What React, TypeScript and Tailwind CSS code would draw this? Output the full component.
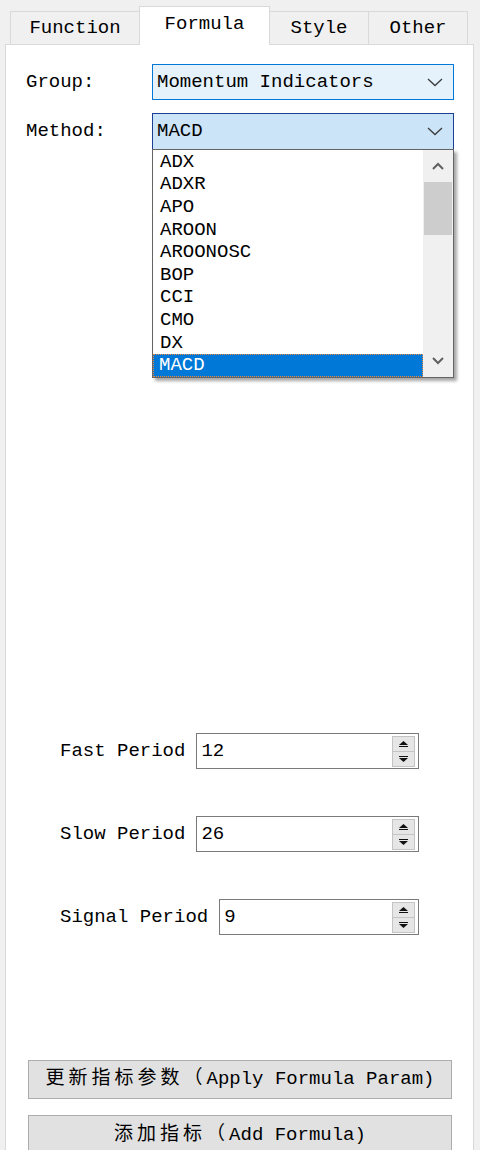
const mono = "font-['Liberation_Mono','Noto_Sans_CJK_SC',monospace]";

const items = ["ADX", "ADXR", "APO", "AROON", "AROONOSC", "BOP", "CCI", "CMO", "DX", "MACD"];

const Chevron = () => (
    <svg width="16" height="9" viewBox="0 0 16 9" className="shrink-0">
        <polyline points="1,1 8,7.5 15,1" fill="none" stroke="#3c3c3c" strokeWidth="1.3" />
    </svg>
);

const Cjk = ({ children }: { children: string }) => (
    <span className="tracking-[4px]">{children}</span>
);

const Tab = ({ label, width, active }: { label: string; width: string; active?: boolean }) =>
    active ? (
        <div className={`${width} h-[39px] -mb-px relative z-10 bg-white border border-b-0 border-[#d9d9d9] flex items-center justify-center pb-[3px]`}>
            {label}
        </div>
    ) : (
        <div className={`${width} h-[33px] bg-[#f0f0f0] border border-b-0 border-[#d9d9d9] -ml-px first:ml-0 flex items-center justify-center`}>
            {label}
        </div>
    );

const SpinRow = ({ label, value }: { label: string; value: string }) => (
    <div className="ml-[54px] w-[359px] flex items-center gap-[11px]">
        <span className="whitespace-pre">{label}</span>
        <div className="flex-1 h-[36px] border border-[#7a7a7a] bg-white flex items-center pl-[4px] pr-[3px]">
            <span className="flex-1">{value}</span>
            <div className="w-[23px] h-[31px] flex flex-col border border-[#c4c4c4] bg-[#e6e6e6]">
                <div className="flex-1 flex items-center justify-center border-b border-[#c4c4c4]">
                    <svg width="9" height="6" viewBox="0 0 9 6"><polygon points="4.5,0 9,4 0,4" fill="#111" /><rect x="0" y="5" width="9" height="1" fill="#111" /></svg>
                </div>
                <div className="flex-1 flex items-center justify-center">
                    <svg width="9" height="6" viewBox="0 0 9 6"><rect x="0" y="0" width="9" height="1" fill="#111" /><polygon points="0,2 9,2 4.5,6" fill="#111" /></svg>
                </div>
            </div>
        </div>
    </div>
);

export default function App() {
    return (
        <div className={`w-[480px] h-[1150px] overflow-hidden bg-[#f0f0f0] pt-[6px] text-[19px] leading-none text-black ${mono}`}>
            <div className="flex items-end ml-[10px]">
                <Tab label="Function" width="w-[130px]" />
                <Tab label="Formula" width="w-[131px] -ml-px" active />
                <Tab label="Style" width="w-[100px] -ml-px" />
                <Tab label="Other" width="w-[100px]" />
            </div>

            <div className="ml-[5px] w-[469px] h-[1120px] bg-white border border-[#d9d9d9] pt-[19px]">
                <div className="flex items-center pl-[20px]">
                    <span className="w-[126px]">Group:</span>
                    <div className="w-[302px] h-[36px] bg-[#e5f1fb] border border-[#0078d7] flex items-center pl-[4px] pr-[10px]">
                        <span className="flex-1 whitespace-pre">Momentum Indicators</span>
                        <Chevron />
                    </div>
                </div>

                <div className="flex items-center pl-[20px] mt-[13px]">
                    <span className="w-[126px]">Method:</span>
                    <div className="relative w-[302px] h-[37px] bg-[#cce4f7] border border-[#1c3f94] flex items-center pl-[4px] pr-[10px]">
                        <span className="flex-1">MACD</span>
                        <Chevron />

                        <div className="absolute left-[-1px] top-[35px] w-[302px] h-[229px] bg-white border border-[#646464] shadow-[3px_3px_3px_rgba(0,0,0,0.35)] flex z-20">
                            <div className="flex-1 flex flex-col pt-[1px]">
                                {items.map((it) =>
                                    it === "MACD" ? (
                                        <div key={it} className="h-[22.7px] flex items-center pl-[6px] bg-[#0078d7] text-white outline-1 outline-dotted outline-offset-[-1px] outline-[#f08a3c]">
                                            {it}
                                        </div>
                                    ) : (
                                        <div key={it} className="h-[22.7px] flex items-center pl-[7px]">
                                            {it}
                                        </div>
                                    )
                                )}
                            </div>
                            <div className="w-[30px] bg-[#f0f0f0] flex flex-col items-center">
                                <div className="h-[32px] flex items-center justify-center">
                                    <svg width="12" height="8" viewBox="0 0 12 8"><polyline points="1,7 6,2 11,7" fill="none" stroke="#606060" strokeWidth="2" /></svg>
                                </div>
                                <div className="w-[28px] h-[53px] bg-[#cdcdcd]" />
                                <div className="flex-1" />
                                <div className="h-[32px] flex items-center justify-center">
                                    <svg width="12" height="8" viewBox="0 0 12 8"><polyline points="1,1 6,6 11,1" fill="none" stroke="#606060" strokeWidth="2" /></svg>
                                </div>
                            </div>
                        </div>
                    </div>
                </div>

                <div className="mt-[583px] flex flex-col gap-[47px]">
                    <SpinRow label="Fast Period" value="12" />
                    <SpinRow label="Slow Period" value="26" />
                    <SpinRow label="Signal Period" value="9" />
                </div>

                <div className="ml-[22px] w-[424px] mt-[125px] flex flex-col gap-[16px]">
                    <button className="h-[39px] bg-[#e1e1e1] border border-[#adadad] flex items-center justify-center whitespace-pre">
                        <Cjk>更新指标参数（</Cjk>Apply Formula Param)
                    </button>
                    <button className="h-[40px] bg-[#e1e1e1] border border-[#adadad] flex items-center justify-center whitespace-pre">
                        <Cjk>添加指标（</Cjk>Add Formula)
                    </button>
                </div>
            </div>
        </div>
    );
}
